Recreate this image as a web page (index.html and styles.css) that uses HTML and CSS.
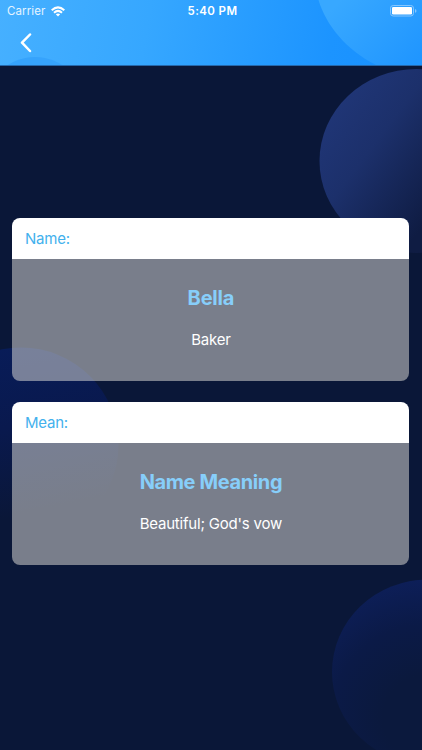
FILE: index.html
```html
<!DOCTYPE html>
<html lang="en">
<head>
<meta charset="utf-8">
<meta name="viewport" content="width=device-width">
<title>Name Meaning</title>
<link rel="stylesheet" href="styles.css">
</head>
<body>
<div class="screen">
  <svg class="backdrop" viewBox="0 0 422 750" aria-hidden="true">
    <defs>
      <linearGradient id="g1" x1="0.05" y1="0.2" x2="0.68" y2="0.65"><stop offset="0" stop-color="#203677"/><stop offset=".4" stop-color="#1c306b"/><stop offset="1" stop-color="#0f1c43"/></linearGradient>
      <linearGradient id="g2" x1="0.4" y1="0" x2="0.6" y2="1"><stop offset="0" stop-color="#081c58"/><stop offset=".4" stop-color="#09194e"/><stop offset=".85" stop-color="#0a1738"/></linearGradient>
      <radialGradient id="g3" cx=".5" cy=".75" r=".78"><stop offset=".3" stop-color="#0b193d"/><stop offset=".65" stop-color="#0b1a47"/><stop offset="1" stop-color="#0d1f5a"/></radialGradient>
    </defs>
    <ellipse cx="416.500" cy="161" rx="97" ry="92" fill="url(#g1)"/>
    <circle cx="21" cy="445" r="97.500" fill="url(#g2)"/>
    <ellipse cx="428" cy="672" rx="96" ry="92.500" fill="url(#g3)"/>
  </svg>
  <header class="header">
    <svg class="header-art" viewBox="0 0 422 65" aria-hidden="true">
      <defs>
        <linearGradient id="h1" gradientUnits="userSpaceOnUse" x1="340" y1="0" x2="412" y2="66"><stop offset="0" stop-color="#38a8ff"/><stop offset="1" stop-color="#2096ff"/></linearGradient>
      </defs>
      <path d="M318.500 0C326 25 346 50 376 65H422V0Z" fill="url(#h1)"/>
      <circle cx="35" cy="107" r="50" fill="#36a3fc"/>
    </svg>
    <div class="status">
      <div class="carrier"><span>Carrier</span>
        <svg class="wifi" viewBox="0 0 14 11" aria-hidden="true"><g fill="none" stroke="#fff" stroke-width="2"><path d="M.7 4.200Q7-1.500 13.300 4.200"/><path d="M3 6.700Q7 3.100 11 6.700"/></g><path d="M4.800 8.200Q7 6.700 9.200 8.200L7 10.500Z" fill="#fff"/></svg>
      </div>
      <div class="time">5:40 PM</div>
      <svg class="battery" viewBox="0 0 27 12" aria-hidden="true"><rect x=".5" y=".5" width="23" height="10.500" rx="2.700" fill="none" stroke="#84c6ff"/><rect x="2" y="2" width="20" height="7.500" rx="1.300" fill="#fff"/><path d="M25 4v3.800q1.500-.6 1.500-1.900T25 4z" fill="#84c6ff"/></svg>
    </div>
    <nav class="nav"><svg class="back" viewBox="0 0 12 20" role="img" aria-label="Back"><path d="M10 1.500 2 9.700 10 18" fill="none" stroke="#fff" stroke-width="2.500" stroke-linecap="round" stroke-linejoin="round"/></svg></nav>
  </header>
  <main class="cards">
    <section class="card">
      <div class="label">Name:</div>
      <div class="content"><h2>Bella</h2><p>Baker</p></div>
    </section>
    <section class="card">
      <div class="label">Mean:</div>
      <div class="content"><h2 class="meaning">Name Meaning</h2><p>Beautiful; God's vow</p></div>
    </section>
  </main>
</div>
</body>
</html>
```
FILE: styles.css
```css
* { box-sizing: border-box; }
body { margin: 0; font-family: Inter, "Liberation Sans", sans-serif; }
.screen { position: relative; width: 422px; height: 750px; overflow: hidden; background: #0a1738; }
.backdrop { position: absolute; inset: 0; width: 422px; height: 750px; }
.header { position: relative; height: 66px; background: linear-gradient(100deg, #46b0ff 0%, #36a7ff 35%, #1c94ff 78%, #1890ff 100%); border-bottom: 1px solid #2568ac; }
.header-art { position: absolute; left: 0; top: 0; width: 422px; height: 65px; }
.status { position: relative; display: grid; grid-template-columns: 1fr auto 1fr; align-items: center; height: 22px; padding: 0 5px 0 7px; color: #fff; }
.carrier { display: flex; align-items: center; gap: 6px; font-size: 11.500px; letter-spacing: .1px; color: #e4f4ff; }
.wifi { width: 14px; height: 11px; }
.time { padding-left: 1px; font-size: 11.500px; font-weight: 600; letter-spacing: .4px; }
.battery { width: 27px; height: 12px; justify-self: end; }
.nav { position: relative; padding: 11px 0 0 20px; }
.back { display: block; width: 12px; height: 20px; }
.cards { position: relative; display: flex; flex-direction: column; gap: 21px; padding: 152px 12.600px 0 12.400px; }
.card { height: 163px; border-radius: 8px; overflow: hidden; }
.label { height: 41px; padding-left: 12.500px; line-height: 41px; font-size: 15px; letter-spacing: -.2px; color: #43b1ed; background: #fff; }
.content { height: 122px; padding-top: 26px; text-align: center; background: rgba(232, 229, 222, .5); }
h2 { margin: 0; font-size: 20px; line-height: 26px; font-weight: 700; letter-spacing: -.2px; color: #87cefa; }
.meaning { letter-spacing: -.38px; }
p { margin: 18px 0 0; font-size: 15px; line-height: 22px; letter-spacing: -.2px; color: #fff; }
```
